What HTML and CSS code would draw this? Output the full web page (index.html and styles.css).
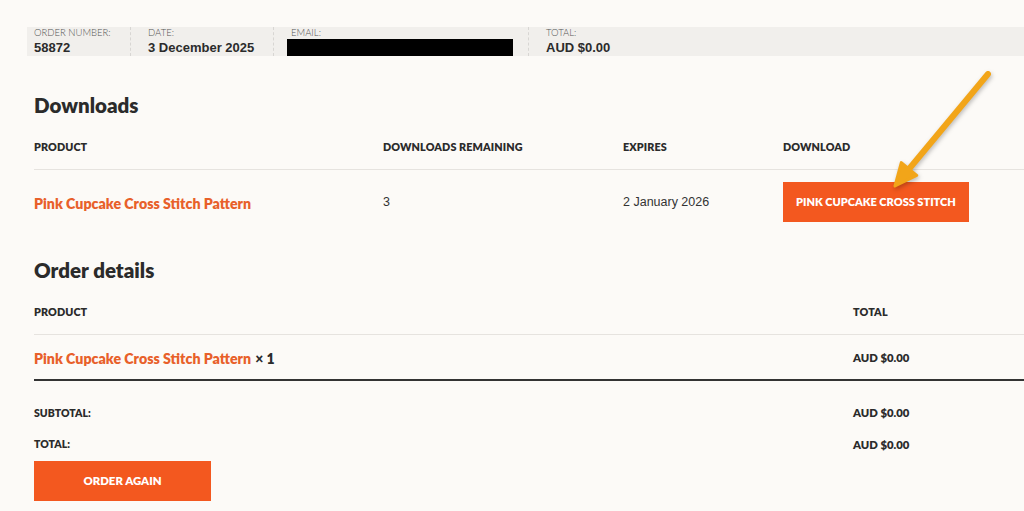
FILE: index.html
```html
<!DOCTYPE html>
<html lang="en">
<head>
    <meta charset="UTF-8">
    <meta name="viewport" content="width=device-width, initial-scale=1.0">
    <title>Order received</title>

    <link rel="stylesheet" href="styles.css">
</head>
<body>

    <!-- Riepilogo ordine -->
    <ul class="order-overview">
        <li class="overview-item item-number">
            <span class="overview-label">Order number:</span>
            <strong>58872</strong>
        </li>
        <li class="overview-item item-date">
            <span class="overview-label">Date:</span>
            <strong>3 December 2025</strong>
        </li>
        <li class="overview-item item-email">
            <span class="overview-label">Email:</span>
            <span class="redacted"></span>
        </li>
        <li class="overview-item item-total">
            <span class="overview-label">Total:</span>
            <strong>AUD $0.00</strong>
        </li>
    </ul>

    <section class="downloads">
        <h2>Downloads</h2>
        <table class="shop-table downloads-table">
            <thead>
                <tr>
                    <th class="col-product">Product</th>
                    <th class="col-remaining">Downloads remaining</th>
                    <th class="col-expires">Expires</th>
                    <th class="col-file">Download</th>
                </tr>
            </thead>
            <tbody>
                <tr>
                    <td><a href="#" class="product-link">Pink Cupcake Cross Stitch Pattern</a></td>
                    <td class="plain">3</td>
                    <td class="plain">2 January 2026</td>
                    <td><a href="#" class="button">Pink Cupcake Cross Stitch</a></td>
                </tr>
            </tbody>
        </table>
    </section>

    <section class="order-details">
        <h2>Order details</h2>
        <table class="shop-table details-table">
            <thead>
                <tr>
                    <th>Product</th>
                    <th class="col-total">Total</th>
                </tr>
            </thead>
            <tbody>
                <tr class="item-row">
                    <td><a href="#" class="product-link">Pink Cupcake Cross Stitch Pattern</a> <strong class="qty">&times;&nbsp;1</strong></td>
                    <td class="amount">AUD $0.00</td>
                </tr>
            </tbody>
            <tfoot>
                <tr class="first-foot">
                    <th>Subtotal:</th>
                    <td class="amount">AUD $0.00</td>
                </tr>
                <tr>
                    <th>Total:</th>
                    <td class="amount">AUD $0.00</td>
                </tr>
            </tfoot>
        </table>

        <a href="#" class="button button-wide">Order again</a>
    </section>

    <!-- Freccia di annotazione -->
    <svg class="annotation-arrow" width="120" height="130" viewBox="0 0 120 130">
        <line x1="102" y1="10" x2="23" y2="105" />
        <polygon points="9,122 15.3,98.6 30.7,111.4" />
    </svg>

</body>
</html>
```

FILE: styles.css
```css
body {
    font-family: 'Lato', 'Liberation Sans', sans-serif;
    background-color: #fcfaf7;
    color: #2b2b2b;
    margin: 0;
    padding: 27px 0 0 34px;
    overflow: hidden;
    position: relative;
}

/* Barra riepilogo */
.order-overview {
    list-style: none;
    margin: 0 0 0 -7px;
    padding: 0;
    display: flex;
    height: 29px;
    background-color: #f1efec;
}

.overview-item {
    display: flex;
    flex-direction: column;
    padding: 0 0 0 17px;
    border-right: 1px dashed #d8d6d3;
}

.item-number {
    width: 96px;
    padding-left: 7px;
}

.item-date {
    width: 125px;
}

.item-email {
    width: 237px;
}

.item-total {
    flex: 1;
    border-right: none;
}

.overview-label {
    font-size: 9.5px;
    font-weight: 300;
    text-transform: uppercase;
    color: #555;
    line-height: 12px;
}

.overview-item strong {
    font-family: 'Liberation Sans', 'Roboto', sans-serif;
    font-size: 13px;
    font-weight: bold;
    line-height: 18px;
    color: #2b2b2b;
}

.redacted {
    display: block;
    width: 226px;
    height: 18px;
    background-color: #000;
    margin-left: -4px;
}

h2 {
    font-size: 20.5px;
    font-weight: 800;
    line-height: 24px;
    margin: 0;
    color: #2b2b2b;
}

.downloads h2 {
    margin-top: 37px;
    margin-bottom: 6px;
}

.order-details h2 {
    margin-top: 24px;
    margin-bottom: 6px;
}

/* Tabelle */
.shop-table {
    width: 990px;
    border-collapse: collapse;
    table-layout: fixed;
}

.shop-table th,
.shop-table td {
    text-align: left;
    padding: 0;
    vertical-align: middle;
}

.shop-table thead th {
    height: 46px;
    font-size: 10.8px;
    font-weight: 800;
    text-transform: uppercase;
    letter-spacing: 0.1px;
    border-bottom: 1px solid #e6e3df;
}

.col-product {
    width: 349px;
}

.col-remaining {
    width: 240px;
}

.col-expires {
    width: 160px;
}

.downloads-table tbody td {
    height: 64px;
}

.plain {
    font-family: 'Liberation Sans', 'Roboto', sans-serif;
    font-size: 12.5px;
    color: #333;
}

.product-link {
    color: #e8602a;
    font-weight: 800;
    font-size: 14.2px;
    text-decoration: none;
}

.button {
    display: inline-block;
    background-color: #f3581f;
    color: white;
    font-weight: 800;
    font-size: 11px;
    text-transform: uppercase;
    text-decoration: none;
    line-height: 40px;
    padding: 0 13px;
}

.button-wide {
    width: 177px;
    padding: 0;
    text-align: center;
    margin-top: 1px;
    font-size: 11.4px;
}

.col-total {
    width: 171px;
}

.item-row td {
    height: 44px;
    border-bottom: 2px solid #333;
}

.qty {
    font-size: 14px;
    font-weight: 800;
}

.amount {
    font-size: 11.3px;
    font-weight: 800;
}

.details-table tfoot th {
    font-size: 10.5px;
}

.details-table tfoot th,
.details-table tfoot td {
    height: 32px;
    font-weight: 800;
    text-transform: uppercase;
}

.details-table tfoot .first-foot th,
.details-table tfoot .first-foot td {
    height: 48px;
    padding-top: 16px;
    box-sizing: border-box;
}

/* Freccia sopra il contenuto */
.annotation-arrow {
    position: absolute;
    left: 886px;
    top: 64px;
    filter: drop-shadow(1px 2px 2px rgba(0, 0, 0, 0.25));
}

.annotation-arrow line {
    stroke: #f2a519;
    stroke-width: 6;
    stroke-linecap: round;
}

.annotation-arrow polygon {
    fill: #f2a519;
    stroke: #f2a519;
    stroke-width: 3;
    stroke-linejoin: round;
}
```
